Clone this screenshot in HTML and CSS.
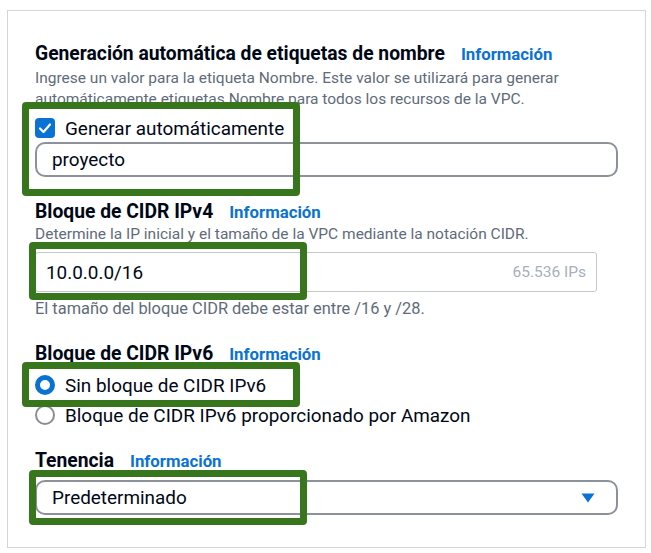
FILE: index.html
```html
<!DOCTYPE html>
<html lang="es">
<head>
<meta charset="utf-8">
<title>VPC</title>
<link rel="stylesheet" href="styles.css">
</head>
<body>
<div class="panel">
  <section class="field">
    <div class="label-row"><span class="label">Generación automática de etiquetas de nombre</span><span class="info">Información</span></div>
    <p class="desc">Ingrese un valor para la etiqueta Nombre. Este valor se utilizará para generar<br>automáticamente etiquetas Nombre para todos los recursos de la VPC.</p>
    <div class="check-row">
      <span class="checkbox"><svg viewBox="0 0 20 20" width="20" height="20"><path d="M5 10.5 L8.5 14 L15 6.5" fill="none" stroke="#fff" stroke-width="2.2" stroke-linecap="round" stroke-linejoin="round"/></svg></span>
      <span class="opt">Generar automáticamente</span>
    </div>
    <div class="input round">proyecto</div>
  </section>

  <section class="field f2">
    <div class="label-row"><span class="label">Bloque de CIDR IPv4</span><span class="info">Información</span></div>
    <p class="desc d1">Determine la IP inicial y el tamaño de la VPC mediante la notación CIDR.</p>
    <div class="input square"><span>10.0.0.0/16</span><span class="count">65.536 IPs</span></div>
    <p class="desc hint">El tamaño del bloque CIDR debe estar entre /16 y /28.</p>
  </section>

  <section class="field f3">
    <div class="label-row"><span class="label">Bloque de CIDR IPv6</span><span class="info">Información</span></div>
    <div class="radio-row r1"><span class="radio on"></span><span class="opt">Sin bloque de CIDR IPv6</span></div>
    <div class="radio-row r2"><span class="radio"></span><span class="opt">Bloque de CIDR IPv6 proporcionado por Amazon</span></div>
  </section>

  <section class="field f4">
    <div class="label-row"><span class="label">Tenencia</span><span class="info">Información</span></div>
    <div class="input round select"><span>Predeterminado</span><svg class="caret" viewBox="0 0 14 10" width="14" height="10"><path d="M0.5 0.5 H13.5 L7 9.5 Z" fill="#0972d3"/></svg></div>
  </section>

  <div class="mark m1"></div>
  <div class="mark m2"></div>
  <div class="mark m3"></div>
  <div class="mark m4"></div>
</div>
</body>
</html>
```

FILE: styles.css
```css
* { box-sizing: border-box; }
body {
  margin: 0;
  background: #fff;
  font-family: Roboto, "Liberation Sans", sans-serif;
  color: #000716;
}
.panel {
  position: relative;
  margin: 10px 0 0 7px;
  width: 639px;
  height: 538px;
  border: 1px solid #d5d5d5;
  padding: 32px 0 0 27px;
}
.field { margin: 0; }
.f2 { margin-top: 24px; }
.f3 { margin-top: 24px; }
.f4 { margin-top: 23px; }
.label-row {
  display: flex;
  align-items: baseline;
  height: 22px;
  line-height: 22px;
}
.label {
  font-weight: 700;
  font-size: 19.3px;
  margin-right: 16px;
}
.info {
  color: #0972d3;
  font-weight: 700;
  font-size: 16.8px;
}
.desc {
  margin: 3px 0 0;
  font-size: 15.5px;
  line-height: 21px;
  color: #5f6b7a;
}
.d1 { margin-top: 1px; }
.hint { margin-top: 6px; font-size: 16.4px; }
.check-row, .radio-row {
  display: flex;
  align-items: center;
  height: 22px;
  margin-top: 7px;
}
.opt {
  font-size: 18.9px;
  margin-left: 10px;
}
.checkbox {
  width: 20px;
  height: 20px;
  border-radius: 4px;
  background: #0972d3;
  display: flex;
}
.input {
  display: flex;
  align-items: center;
  font-size: 18.9px;
}
.round {
  margin-top: 3px;
  width: 583px;
  height: 35px;
  border: 2px solid #8d9199;
  border-radius: 10px;
  padding: 0 0 0 15px;
}
.square {
  margin-top: 7px;
  width: 562px;
  height: 40px;
  border: 1px solid #c6c6cd;
  border-radius: 3px;
  padding: 0 10px 0 10px;
  justify-content: space-between;
}
.count {
  font-size: 15.5px;
  color: #a7afb9;
}
.select {
  margin-top: 8px;
  justify-content: space-between;
  padding-right: 21px;
}
.radio-row { height: 24px; }
.r1 { margin-top: 8px; }
.r2 { margin-top: 6px; }
.radio {
  width: 20px;
  height: 20px;
  border-radius: 50%;
  border: 2px solid #8c8c94;
}
.radio.on {
  border: 5.5px solid #0972d3;
}
.mark {
  position: absolute;
  border: 7px solid #38761d;
  border-radius: 4px;
}
.m1 { left: 14px; top: 91px; width: 278px; height: 94px; }
.m2 { left: 21px; top: 231px; width: 278px; height: 58px; }
.m3 { left: 14px; top: 351px; width: 278px; height: 45px; }
.m4 { left: 21px; top: 459px; width: 278px; height: 55px; }
```
